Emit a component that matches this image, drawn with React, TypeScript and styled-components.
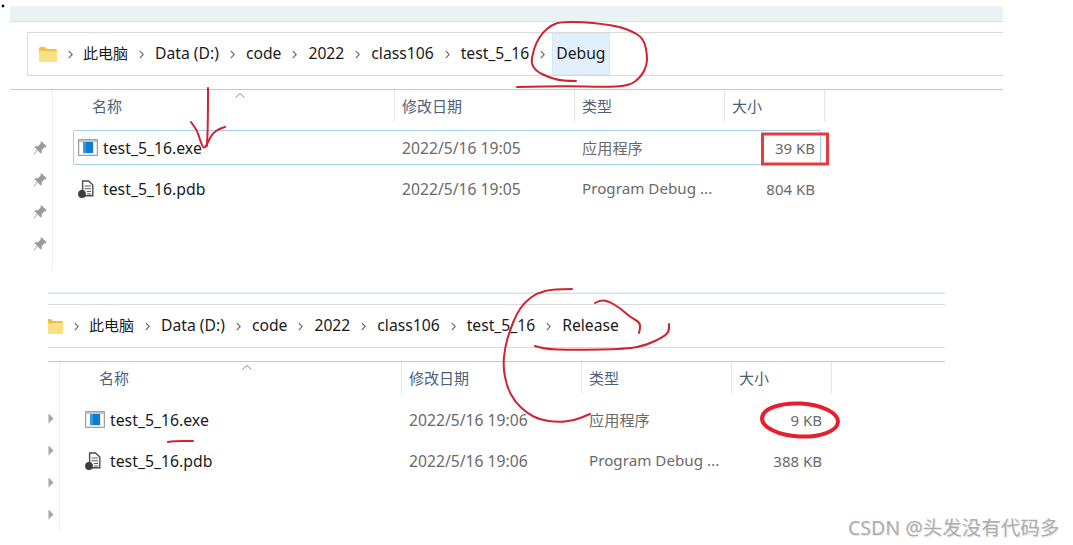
import styled, { createGlobalStyle } from "styled-components";

const GlobalStyle = createGlobalStyle`
    html, body {
        margin: 0;
        padding: 0;
        background: #ffffff;
    }
    body {
        width: 1073px;
        height: 545px;
        overflow: hidden;
        font-family: "Noto Sans", "Noto Sans CJK SC", sans-serif;
    }
`;

type FileRow = {
    name: string;
    kind: "exe" | "pdb";
    date: string;
    type: string;
    size: string;
    selected?: boolean;
};

type PanelProps = {
    crumb: string;
    crumbActive?: boolean;
    files: FileRow[];
    marker: "pin" | "arrow";
    left: number;
    width: number;
    topGap: number;
    stripHeight: number;
    barIndent: number;
    folderOffset: number;
    sideWidth: number;
    bodyHeight: number;
    markerTop: number;
};

const PATH = ["此电脑", "Data (D:)", "code", "2022", "class106", "test_5_16"];

const debugFiles: FileRow[] = [
    { name: "test_5_16.exe", kind: "exe", date: "2022/5/16 19:05", type: "应用程序", size: "39 KB", selected: true },
    { name: "test_5_16.pdb", kind: "pdb", date: "2022/5/16 19:05", type: "Program Debug ...", size: "804 KB" },
];

const releaseFiles: FileRow[] = [
    { name: "test_5_16.exe", kind: "exe", date: "2022/5/16 19:06", type: "应用程序", size: "9 KB" },
    { name: "test_5_16.pdb", kind: "pdb", date: "2022/5/16 19:06", type: "Program Debug ...", size: "388 KB" },
];

// turns hand-drawn points into one soft stroke
function scribble(points: number[][]) {
    let d = `M${points[0][0]} ${points[0][1]}`;
    for (let i = 1; i < points.length - 1; i++) {
        const midX = (points[i][0] + points[i + 1][0]) / 2;
        const midY = (points[i][1] + points[i + 1][1]) / 2;
        d += ` Q${points[i][0]} ${points[i][1]} ${midX} ${midY}`;
    }
    const last = points[points.length - 1];
    return `${d} L${last[0]} ${last[1]}`;
}

const STROKES: number[][][] = [
    // circle around Debug
    [[576, 81], [562, 81], [548, 77], [536, 71], [531, 63], [533, 53], [536, 43], [543, 32], [552, 25], [560, 22], [583, 22], [603, 24], [621, 27], [633, 32], [640, 36], [645, 43], [647, 55], [647, 65], [641, 77], [629, 86], [603, 87], [569, 86], [517, 87]],
    // arrow to the debug exe
    [[208, 88], [208, 120], [207, 146]],
    [[191, 122], [197, 130], [200, 140], [204, 150], [209, 140], [213, 133], [219, 129], [225, 127]],
    // marks around Release
    [[572, 289], [553, 289], [537, 293], [525, 302], [517, 313], [510, 330], [505, 347], [503, 367], [507, 387], [515, 402], [527, 413], [540, 420], [557, 422], [573, 421], [590, 414]],
    [[595, 303], [600, 300], [608, 301], [620, 308], [630, 317], [641, 323], [639, 333]],
    [[535, 346], [543, 349], [573, 350], [627, 349], [647, 345], [663, 337], [669, 332], [669, 324]],
    // line under the release exe
    [[168, 442], [174, 441], [193, 441]],
];

function FolderIcon() {
    return (
        <svg width="18" height="15" viewBox="0 0 18 15">
            <path d="M0 1.5Q0 0 1.5 0H6L8 2H16.5Q18 2 18 3.5V5H0Z" fill="#f0c040" />
            <path d="M0 4H18V13.5Q18 15 16.5 15H1.5Q0 15 0 13.5Z" fill="#fbdf85" />
        </svg>
    );
}

function ExeIcon() {
    return (
        <svg width="20" height="17" viewBox="0 0 20 17">
            <rect x="0.5" y="0.5" width="19" height="16" fill="#e6e6e6" stroke="#a0a0a0" />
            <rect x="1" y="1" width="18" height="2" fill="#c4c4c4" />
            <rect x="2" y="3.5" width="3" height="11.5" fill="#ffffff" />
            <rect x="5" y="3" width="10" height="11" fill="#0f7cd0" />
            <rect x="5" y="3" width="3" height="11" fill="#3a98e0" />
            <rect x="16" y="3.5" width="2" height="11.5" fill="#ffffff" />
        </svg>
    );
}

function PdbIcon() {
    return (
        <svg width="16" height="18" viewBox="0 0 16 18">
            <path d="M4.6 1H10.5L14.8 5V15.8H4.6Z" fill="#ffffff" stroke="#4c4c4c" strokeWidth="1.4" />
            <path d="M6.5 6H13M6.5 8.8H13M9 11.5H13M9 14H13" stroke="#5c5c5c" strokeWidth="1.1" fill="none" />
            <circle cx="4" cy="14" r="3.9" fill="#3c3c3c" />
        </svg>
    );
}

function PinIcon() {
    return (
        <svg width="14" height="14" viewBox="0 0 14 14">
            <path d="M8.6 0.2L13.8 5.4L12.4 6.6L11.4 6.2L8.8 9L9 11.2L7.6 12.4L4.8 9.6L1 13.6L0.4 13L4.2 9L1.6 6.4L2.8 5L5 5.2L7.8 2.6L7.4 1.4Z" fill="#989e9e" />
        </svg>
    );
}

function ExpandIcon() {
    return (
        <svg width="6" height="11" viewBox="0 0 6 11">
            <path d="M0.5 0.5L5.5 5.5L0.5 10.5Z" fill="#a6a6a6" />
        </svg>
    );
}

function Chevron() {
    return (
        <ChevronBox>
            <svg width="5" height="9" viewBox="0 0 5 9">
                <path d="M0.8 0.8L4.2 4.5L0.8 8.2" fill="none" stroke="#6f6f6f" strokeWidth="1.2" />
            </svg>
        </ChevronBox>
    );
}

function ExplorerPanel(props: PanelProps) {
    return (
        <Panel $left={props.left} $width={props.width} $topGap={props.topGap}>
            <TopStrip $height={props.stripHeight} />
            <AddressBar $indent={props.barIndent}>
                <FolderSlot $offset={props.folderOffset}>
                    <FolderIcon />
                </FolderSlot>
                {PATH.map((part, i) => (
                    <CrumbGroup key={part}>
                        <Chevron />
                        <Crumb $root={i === 0}>{part}</Crumb>
                    </CrumbGroup>
                ))}
                <Chevron />
                <Crumb $active={props.crumbActive}>{props.crumb}</Crumb>
            </AddressBar>
            <PanelBody $height={props.bodyHeight} $sideWidth={props.sideWidth}>
                <Sidebar $top={props.markerTop}>
                    {[0, 1, 2, 3].map((i) => (
                        <Marker key={i} $arrow={props.marker === "arrow"}>
                            {props.marker === "pin" ? <PinIcon /> : <ExpandIcon />}
                        </Marker>
                    ))}
                </Sidebar>
                <ListArea>
                    <HeaderRow>
                        <HeaderCell>
                            名称
                            <SortCaret viewBox="0 0 10 5">
                                <path d="M0.5 4.5L5 0.5L9.5 4.5" fill="none" stroke="#8a8a8a" />
                            </SortCaret>
                        </HeaderCell>
                        <HeaderCell>修改日期</HeaderCell>
                        <HeaderCell>类型</HeaderCell>
                        <HeaderCell>大小</HeaderCell>
                    </HeaderRow>
                    <FileList>
                        {props.files.map((file) => (
                            <Row key={file.name} $selected={file.selected}>
                                <NameCell>
                                    <IconSlot>{file.kind === "exe" ? <ExeIcon /> : <PdbIcon />}</IconSlot>
                                    {file.name}
                                </NameCell>
                                <DateCell>{file.date}</DateCell>
                                <TypeCell>{file.type}</TypeCell>
                                <SizeCell>{file.size}</SizeCell>
                            </Row>
                        ))}
                    </FileList>
                </ListArea>
            </PanelBody>
        </Panel>
    );
}

export default function App() {
    return (
        <Page>
            <GlobalStyle />
            <ExplorerPanel
                crumb="Debug"
                crumbActive
                files={debugFiles}
                marker="pin"
                left={10}
                width={993}
                topGap={6}
                stripHeight={15}
                barIndent={17}
                folderOffset={11}
                sideWidth={43}
                bodyHeight={179}
                markerTop={42}
            />
            <ExplorerPanel
                crumb="Release"
                files={releaseFiles}
                marker="arrow"
                left={48}
                width={897}
                topGap={23}
                stripHeight={1}
                barIndent={0}
                folderOffset={-3}
                sideWidth={12}
                bodyHeight={170}
                markerTop={40}
            />
            <Annotations viewBox="0 0 1073 545">
                <circle cx="3" cy="6" r="1.4" fill="#111111" />
                {STROKES.map((stroke, i) => (
                    <path key={i} d={scribble(stroke)} fill="none" stroke="#cf2330" strokeWidth="2" strokeLinecap="round" strokeLinejoin="round" />
                ))}
                <rect x="762.5" y="134" width="65" height="30" fill="none" stroke="#e63a3f" strokeWidth="3" />
                <ellipse cx="800" cy="420" rx="38" ry="16.5" fill="none" stroke="#e3202c" strokeWidth="4" transform="rotate(3 800 420)" />
            </Annotations>
            <Watermark>CSDN @头发没有代码多</Watermark>
        </Page>
    );
}

const Page = styled.div`
    position: relative;
    width: 1073px;
    height: 545px;
    overflow: hidden;
    display: flex;
    flex-direction: column;
    background: #ffffff;
`;

const Panel = styled.section<{ $left: number; $width: number; $topGap: number }>`
    display: flex;
    flex-direction: column;
    flex-shrink: 0;
    margin-left: ${(p) => p.$left}px;
    margin-top: ${(p) => p.$topGap}px;
    width: ${(p) => p.$width}px;
`;

const TopStrip = styled.div<{ $height: number }>`
    height: ${(p) => p.$height}px;
    background: #e9f3f6;
    border-bottom: 1px solid #d9dfe1;
`;

const AddressBar = styled.div<{ $indent: number }>`
    display: flex;
    align-items: stretch;
    height: 42px;
    margin-top: 10px;
    margin-left: ${(p) => p.$indent}px;
    border: 1px solid #d9d9d9;
    border-right: none;
    border-left-width: ${(p) => (p.$indent ? 1 : 0)}px;
    overflow: hidden;
    font-size: 15.7px;
    color: #1a1a1a;
`;

const FolderSlot = styled.div<{ $offset: number }>`
    display: flex;
    align-items: center;
    flex-shrink: 0;
    margin-left: ${(p) => p.$offset}px;
`;

const CrumbGroup = styled.div`
    display: flex;
    align-items: stretch;
`;

const ChevronBox = styled.span`
    display: flex;
    align-items: center;
    padding: 0 11px;
`;

const Crumb = styled.span<{ $active?: boolean; $root?: boolean }>`
    display: flex;
    align-items: center;
    padding: 0 4px 3px;
    margin: 0 -4px 0 ${(p) => (p.$root ? -5 : -4)}px;
    white-space: nowrap;
    font-size: ${(p) => (p.$root ? "15px" : "inherit")};
    background: ${(p) => (p.$active ? "#e2f0fb" : "transparent")};
    box-shadow: ${(p) => (p.$active ? "inset 0 0 0 1px #d6e8f6" : "none")};
`;

const PanelBody = styled.div<{ $height: number; $sideWidth: number }>`
    display: grid;
    grid-template-columns: ${(p) => p.$sideWidth}px 1fr;
    height: ${(p) => p.$height}px;
    margin-top: 13px;
    border-top: 1px solid #c8c8c8;
`;

const Sidebar = styled.div<{ $top: number }>`
    display: flex;
    flex-direction: column;
    padding-top: ${(p) => p.$top}px;
    border-right: 1px solid #eeeeee;
`;

const Marker = styled.div<{ $arrow: boolean }>`
    display: flex;
    align-items: center;
    justify-content: ${(p) => (p.$arrow ? "flex-start" : "flex-end")};
    height: 32px;
    padding-right: ${(p) => (p.$arrow ? 0 : 5)}px;
`;

const ListArea = styled.div`
    display: flex;
    flex-direction: column;
`;

const HeaderRow = styled.div`
    display: grid;
    grid-template-columns: 342px 180px 150px 100px;
    width: 772px;
    height: 32px;
`;

const HeaderCell = styled.div`
    position: relative;
    display: flex;
    align-items: center;
    padding: 0 0 2px 7px;
    border-right: 1px solid #e5e5e5;
    font-size: 15px;
    color: #4c607a;

    &:first-child {
        padding-left: 39px;
    }
`;

const SortCaret = styled.svg`
    position: absolute;
    left: 182px;
    top: 3px;
    width: 10px;
    height: 5px;
`;

const FileList = styled.div`
    display: flex;
    flex-direction: column;
    gap: 6px;
    margin-top: 8px;
    margin-left: 20px;
`;

const Row = styled.div<{ $selected?: boolean }>`
    display: grid;
    grid-template-columns: 321px 180px 150px 95px;
    width: 748px;
    height: 35px;
    box-sizing: border-box;
    align-items: center;
    border: 1px solid ${(p) => (p.$selected ? "#a5cfe8" : "transparent")};
    border-radius: 2px;
`;

const NameCell = styled.div`
    display: flex;
    align-items: center;
    font-size: 15.8px;
    color: #1a1a1a;
    white-space: nowrap;
`;

const IconSlot = styled.span`
    display: flex;
    align-items: center;
    width: 20px;
    margin-left: 4px;
    margin-right: 5px;
`;

const DateCell = styled.div`
    padding-left: 7px;
    font-size: 15.7px;
    color: #6a6a6a;
    white-space: nowrap;
`;

const TypeCell = styled(DateCell)`
    padding-bottom: 2px;
    font-size: 15.2px;
`;

const SizeCell = styled(DateCell)`
    padding: 0 5px 0 0;
    font-size: 15px;
    text-align: right;
`;

const Annotations = styled.svg`
    position: absolute;
    left: 0;
    top: 0;
    width: 1073px;
    height: 545px;
    pointer-events: none;
`;

const Watermark = styled.div`
    position: absolute;
    left: 848px;
    top: 512px;
    font-size: 19.5px;
    color: #adadad;
    white-space: nowrap;
    text-shadow: 1px 1px 0 #e8e8e8;
`;
